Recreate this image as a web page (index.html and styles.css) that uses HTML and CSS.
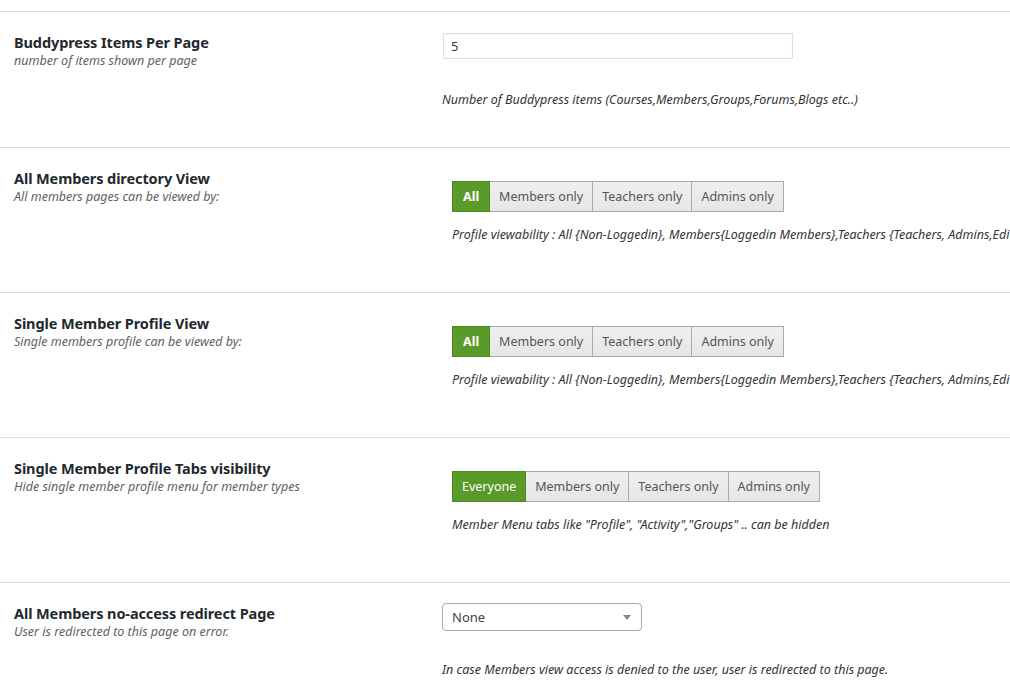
FILE: index.html
```html
<!DOCTYPE html>
<html>
<head>
<meta charset="utf-8">
<link rel="stylesheet" href="styles.css">
</head>
<body>
<div class="page">
  <div class="top-strip"></div>

  <div class="row row-first">
    <div class="label">
      <div class="title">Buddypress Items Per Page</div>
      <div class="sub">number of items shown per page</div>
    </div>
    <div class="field">
      <div class="text-input">5</div>
      <div class="desc desc-first">Number of Buddypress items (Courses,Members,Groups,Forums,Blogs etc..)</div>
    </div>
  </div>

  <div class="row">
    <div class="label">
      <div class="title">All Members directory View</div>
      <div class="sub">All members pages can be viewed by:</div>
    </div>
    <div class="field field-buttons">
      <div class="btn-group">
        <span class="btn active btn-all">All</span><span class="btn">Members only</span><span class="btn">Teachers only</span><span class="btn">Admins only</span>
      </div>
      <div class="desc desc-btn">Profile viewability : All {Non-Loggedin}, Members{Loggedin Members},Teachers {Teachers, Admins,Editors}</div>
    </div>
  </div>

  <div class="row">
    <div class="label">
      <div class="title">Single Member Profile View</div>
      <div class="sub">Single members profile can be viewed by:</div>
    </div>
    <div class="field field-buttons">
      <div class="btn-group">
        <span class="btn active btn-all">All</span><span class="btn">Members only</span><span class="btn">Teachers only</span><span class="btn">Admins only</span>
      </div>
      <div class="desc desc-btn">Profile viewability : All {Non-Loggedin}, Members{Loggedin Members},Teachers {Teachers, Admins,Editors}</div>
    </div>
  </div>

  <div class="row">
    <div class="label">
      <div class="title">Single Member Profile Tabs visibility</div>
      <div class="sub">Hide single member profile menu for member types</div>
    </div>
    <div class="field field-buttons">
      <div class="btn-group">
        <span class="btn active">Everyone</span><span class="btn">Members only</span><span class="btn">Teachers only</span><span class="btn">Admins only</span>
      </div>
      <div class="desc desc-btn">Member Menu tabs like "Profile", "Activity","Groups" .. can be hidden</div>
    </div>
  </div>

  <div class="row row-last">
    <div class="label">
      <div class="title">All Members no-access redirect Page</div>
      <div class="sub">User is redirected to this page on error.</div>
    </div>
    <div class="field field-select">
      <div class="select">
        <span>None</span>
        <svg class="caret" width="8" height="5" viewBox="0 0 8 5"><path d="M0 0H8L4 5Z" fill="#888"/></svg>
      </div>
      <div class="desc desc-select">In case Members view access is denied to the user, user is redirected to this page.</div>
    </div>
  </div>
</div>
</body>
</html>
```

FILE: styles.css
```css
html, body {
  margin: 0;
  padding: 0;
  background: #fff;
}
body {
  font-family: "Noto Sans", "Open Sans", sans-serif;
  color: #23282d;
  width: 1010px;
  height: 691px;
  overflow: hidden;
}
.page {
  width: 1010px;
}
.top-strip {
  height: 11px;
  border-bottom: 1px solid #dcdcdc;
}
.row {
  display: grid;
  grid-template-columns: 428px 1fr;
  padding-left: 14px;
  height: 144px;
  border-bottom: 1px solid #dcdcdc;
  white-space: nowrap;
  overflow: hidden;
}
.row-first {
  height: 135px;
}
.row-last {
  height: 108px;
  border-bottom: none;
}
.label {
  padding-top: 21px;
}
.title {
  font-size: 14.5px;
  font-weight: 700;
  line-height: 18px;
  color: #23282d;
  letter-spacing: -0.1px;
}
.sub {
  margin-top: 2px;
  font-size: 12.5px;
  font-style: italic;
  line-height: 16px;
  color: #5f5f5f;
}
.field {
  padding-top: 21px;
}
.field-select {
  padding-top: 20px;
}
.field-buttons {
  padding-top: 33px;
  padding-left: 10px;
}
.text-input {
  margin-left: 1px;
  width: 350px;
  height: 26px;
  border: 1px solid #ddd;
  box-sizing: border-box;
  font-size: 13px;
  line-height: 24px;
  padding-left: 7px;
  color: #32373c;
  box-shadow: inset 0 1px 2px rgba(0,0,0,0.04);
}
.desc {
  font-size: 12.5px;
  font-style: italic;
  color: #333;
  line-height: 16px;
}
.desc-first {
  margin-top: 33px;
}
.desc-btn {
  margin-top: 15px;
}
.desc-select {
  margin-top: 31px;
}
.btn-group {
  display: flex;
}
.btn {
  display: inline-block;
  height: 31px;
  line-height: 29px;
  box-sizing: border-box;
  border: 1px solid #a9a9a9;
  border-left: none;
  background: linear-gradient(#efefef, #e6e6e6);
  color: #555;
  font-size: 12.5px;
  padding: 0 9px;
}
.btn:first-child {
  border-left: 1px solid #a9a9a9;
}
.btn.active {
  background: #5a9a28;
  border-color: #4c8a1e;
  color: #fff;
  font-weight: 400;
}
.btn-all {
  font-weight: 700 !important;
  padding: 0 10px;
}
.select {
  width: 200px;
  height: 28px;
  box-sizing: border-box;
  border: 1px solid #aaa;
  border-radius: 4px;
  display: flex;
  align-items: center;
  justify-content: space-between;
  padding: 0 10px 0 9px;
  font-size: 13px;
  color: #444;
}
.caret {
  display: block;
}
```
